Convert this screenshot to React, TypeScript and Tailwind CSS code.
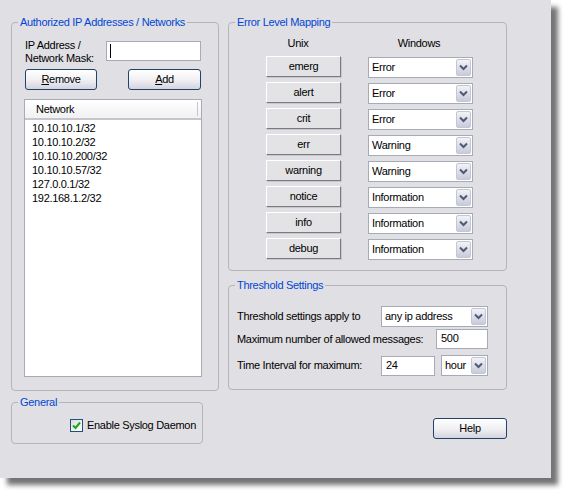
import React from "react";

const levels = [
  { unix: "emerg", win: "Error" },
  { unix: "alert", win: "Error" },
  { unix: "crit", win: "Error" },
  { unix: "err", win: "Warning" },
  { unix: "warning", win: "Warning" },
  { unix: "notice", win: "Information" },
  { unix: "info", win: "Information" },
  { unix: "debug", win: "Information" },
];

const networks = [
  "10.10.10.1/32",
  "10.10.10.2/32",
  "10.10.10.200/32",
  "10.10.10.57/32",
  "127.0.0.1/32",
  "192.168.1.2/32",
];

function Chevron() {
  return (
    <svg width="9" height="7" viewBox="0 0 9 7" fill="none">
      <path d="M1 1.5 L4.5 5 L8 1.5" stroke="#4d5a78" strokeWidth="2" />
    </svg>
  );
}

function Combo({ value, className }: { value: string; className: string }) {
  return (
    <div className={`flex h-[21px] border border-[#a5acb5] bg-white ${className}`}>
      <span className="flex-1 truncate pl-[3px] leading-[19px]">{value}</span>
      <span className="m-[1px] flex w-[15px] items-center justify-center rounded-[2px] border border-[#c3c6d4] bg-gradient-to-b from-[#f2f2f6] to-[#c9cbda]">
        <Chevron />
      </span>
    </div>
  );
}

function XpButton({ children, className }: { children: React.ReactNode; className: string }) {
  return (
    <button className={`h-[21px] rounded-[3px] border border-[#24416b] bg-gradient-to-b from-white via-[#f1f1f4] to-[#d4d4de] text-black ${className}`}>
      {children}
    </button>
  );
}

function Group({ title, className, children }: { title: string; className: string; children: React.ReactNode }) {
  return (
    <fieldset className={`rounded-[4px] border border-[#b4b4ba] ${className}`}>
      <legend className="ml-[6px] whitespace-nowrap px-[2px] leading-[13px] text-[#0046d5]">{title}</legend>
      {children}
    </fieldset>
  );
}

export default function App() {
  return (
    <div className="h-[490px] w-[563px] bg-white font-['Liberation_Sans',Arial,sans-serif] text-[11px] tracking-[-0.3px] text-black">
      <div className="flex h-[478px] w-[551px] gap-[9px] bg-[#e0dfe3] pl-[11px] pt-[16px] shadow-[7px_7px_5px_rgba(0,0,0,0.55)]">
        {/* left column */}
        <div className="flex flex-col">
          <Group title="Authorized IP Addresses / Networks" className="h-[375px] w-[208px]">
            <div className="px-[12px] pt-[10px]">
              <div className="flex">
                <div className="w-[82px] pl-[1px] leading-[13px]">
                  IP Address /<br />
                  Network Mask:
                </div>
                <div className="mt-[2px] h-[20px] w-[95px] border border-[#a5acb5] bg-white pl-[3px] pt-[2px]">
                  <div className="h-[14px] w-[1px] bg-black" />
                </div>
              </div>
              <div className="mt-[4px] flex w-[178px] justify-between pl-[1px] pr-[1px]">
                <XpButton className="w-[72px]">
                  <span className="underline underline-offset-1">R</span>emove
                </XpButton>
                <XpButton className="w-[73px]">
                  <span className="underline underline-offset-1">A</span>dd
                </XpButton>
              </div>
              <div className="mt-[9px] h-[278px] w-[178px] border border-[#a5acb5] bg-white">
                <div className="flex h-[20px] border-b-[2px] border-[#c5c5cb] bg-gradient-to-b from-white to-[#f1f1f3]">
                  <span className="flex-1 pl-[11px] leading-[18px]">Network</span>
                  <span className="my-[2px] mr-[3px] w-[1px] bg-[#c5c5cb]" />
                </div>
                <div className="pl-[7px] pt-[1px]">
                  {networks.map((n) => (
                    <div key={n} className="h-[14px] leading-[14px]">
                      {n}
                    </div>
                  ))}
                </div>
              </div>
            </div>
          </Group>

          <Group title="General" className="mt-[5px] h-[48px] w-[192px]">
            <label className="flex items-center gap-[4px] pl-[58px] pt-[8px]">
              <span className="flex h-[13px] w-[13px] items-center justify-center border border-[#1c5180] bg-gradient-to-br from-[#dcdcd7] to-white">
                <svg width="9" height="9" viewBox="0 0 9 9">
                  <path d="M1 4.5 L3.5 7 L8 1.5" stroke="#21a121" strokeWidth="2" fill="none" />
                </svg>
              </span>
              <span>Enable Syslog Daemon</span>
            </label>
          </Group>
        </div>

        {/* right column */}
        <div className="flex flex-col">
          <Group title="Error Level Mapping" className="h-[255px] w-[279px]">
            <div className="flex pt-[8px] leading-[13px]">
              <span className="w-[114px] pl-[24px] text-center">Unix</span>
              <span className="w-[152px] text-center">Windows</span>
            </div>
            <div className="mt-[6px] flex flex-col gap-[5px]">
              {levels.map((l) => (
                <div key={l.unix} className="flex h-[21px] items-start">
                  <button className="ml-[37px] h-[21px] w-[75px] border border-b-[#7a7a80] border-l-white border-r-[#7a7a80] border-t-white bg-[#e3e3e6] shadow-[1px_1px_0_#c8c8cc]">
                    {l.unix}
                  </button>
                  <Combo value={l.win} className="ml-[27px] mt-[1px] w-[105px]" />
                </div>
              ))}
            </div>
          </Group>

          <Group title="Threshold Settings" className="mt-[8px] h-[111px] w-[279px]">
            <div className="pl-[8px] pt-[14px]">
              <div className="flex items-center">
                <span className="w-[144px]">Threshold settings apply to</span>
                <Combo value="any ip address" className="w-[107px]" />
              </div>
              <div className="mt-[2px] flex items-center">
                <span className="w-[199px]">Maximum number of allowed messages:</span>
                <div className="h-[20px] w-[52px] border border-[#a5acb5] bg-white pl-[4px] leading-[16px]">500</div>
              </div>
              <div className="mt-[6px] flex items-center">
                <span className="w-[144px]">Time Interval for maximum:</span>
                <div className="h-[20px] w-[54px] border border-[#a5acb5] bg-white pl-[4px] leading-[16px]">24</div>
                <Combo value="hour" className="ml-[6px] w-[47px]" />
              </div>
            </div>
          </Group>

          <div className="mt-[28px] flex w-[279px] justify-end">
            <XpButton className="w-[74px]">Help</XpButton>
          </div>
        </div>
      </div>
    </div>
  );
}
